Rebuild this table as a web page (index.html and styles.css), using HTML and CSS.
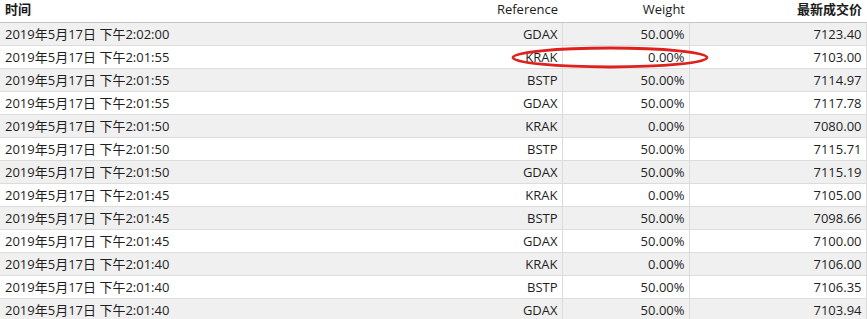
FILE: index.html
```html
<!DOCTYPE html>
<html lang="zh-CN">
<head>
    <meta charset="UTF-8">
    <title>成交记录</title>
    <link rel="stylesheet" href="styles.css">
</head>
<body>
    <div class="grid-wrap">
        <table class="trades">
            <colgroup>
                <col class="col-time">
                <col class="col-ref">
                <col class="col-weight">
                <col class="col-price">
            </colgroup>
            <thead>
                <tr>
                    <th class="left cjk">时间</th>
                    <th>Reference</th>
                    <th>Weight</th>
                    <th class="cjk">最新成交价</th>
                </tr>
            </thead>
            <tbody>
                <tr><td class="left">2019年5月17日 下午2:02:00</td><td>GDAX</td><td>50.00%</td><td>7123.40</td></tr>
                <tr><td class="left">2019年5月17日 下午2:01:55</td><td>KRAK</td><td>0.00%</td><td>7103.00</td></tr>
                <tr><td class="left">2019年5月17日 下午2:01:55</td><td>BSTP</td><td>50.00%</td><td>7114.97</td></tr>
                <tr><td class="left">2019年5月17日 下午2:01:55</td><td>GDAX</td><td>50.00%</td><td>7117.78</td></tr>
                <tr><td class="left">2019年5月17日 下午2:01:50</td><td>KRAK</td><td>0.00%</td><td>7080.00</td></tr>
                <tr><td class="left">2019年5月17日 下午2:01:50</td><td>BSTP</td><td>50.00%</td><td>7115.71</td></tr>
                <tr><td class="left">2019年5月17日 下午2:01:50</td><td>GDAX</td><td>50.00%</td><td>7115.19</td></tr>
                <tr><td class="left">2019年5月17日 下午2:01:45</td><td>KRAK</td><td>0.00%</td><td>7105.00</td></tr>
                <tr><td class="left">2019年5月17日 下午2:01:45</td><td>BSTP</td><td>50.00%</td><td>7098.66</td></tr>
                <tr><td class="left">2019年5月17日 下午2:01:45</td><td>GDAX</td><td>50.00%</td><td>7100.00</td></tr>
                <tr><td class="left">2019年5月17日 下午2:01:40</td><td>KRAK</td><td>0.00%</td><td>7106.00</td></tr>
                <tr><td class="left">2019年5月17日 下午2:01:40</td><td>BSTP</td><td>50.00%</td><td>7106.35</td></tr>
                <tr><td class="left">2019年5月17日 下午2:01:40</td><td>GDAX</td><td>50.00%</td><td>7103.94</td></tr>
            </tbody>
        </table>

        <!-- hand-drawn highlight around the KRAK 0.00% row -->
        <svg class="mark" width="200" height="24" viewBox="0 0 200 24">
            <ellipse cx="99" cy="11.5" rx="97" ry="9.5" fill="none" stroke="#e0201c" stroke-width="2.8"/>
        </svg>
    </div>
</body>
</html>
```

FILE: styles.css
```css
/* General */
body {
    margin: 0;
    padding: 0;
    background: #fff;
    font-family: "Open Sans", "Noto Sans CJK SC", sans-serif;
    font-size: 13px;
    color: #1e1e1e;
    overflow: hidden;
}

.grid-wrap {
    position: relative;
    width: 867px;
}

/* Table */
.trades {
    border-collapse: collapse;
    table-layout: fixed;
    width: 866px;
}

.col-time { width: 440px; }
.col-ref { width: 122px; }
.col-weight { width: 127px; }
.col-price { width: 177px; }

.trades th,
.trades td {
    height: 22px;
    padding: 0 4px 0 5px;
    text-align: right;
    white-space: nowrap;
    box-sizing: border-box;
    line-height: 22px;
}

.trades th {
    font-weight: 400;
    color: #1a1a1a;
    border-bottom: 1px solid #c4c4c4;
    padding-bottom: 3px;
    line-height: 19px;
}

.trades th.cjk {
    font-weight: 700;
}

.trades td {
    border-bottom: 1px solid #dcdcdc;
}

.trades td + td {
    border-left: 1px solid #dcdcdc;
}

.trades td:nth-child(2) {
    border-left: none;
}

.trades td:last-child {
    border-right: 1px solid #dcdcdc;
}

.trades .left {
    text-align: left;
}

.trades tbody tr:nth-child(odd) td {
    background: #f0f0f0;
}

/* Highlight overlay */
.mark {
    position: absolute;
    left: 511px;
    top: 46px;
}
```
